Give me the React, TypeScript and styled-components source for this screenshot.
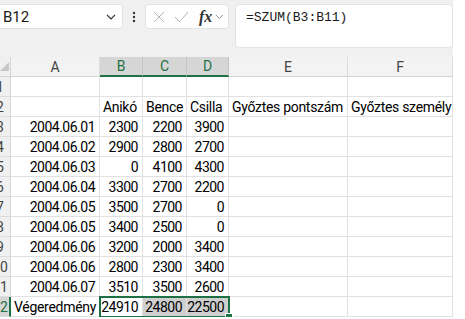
import React from "react";
import styled, { createGlobalStyle } from "styled-components";

const GlobalStyle = createGlobalStyle`
    body {
        margin: 0;
        background: #ffffff;
        font-family: Roboto, "Liberation Sans", sans-serif;
        overflow: hidden;
    }
`;

const Page = styled.div`
    width: 453px;
    overflow: hidden;
`;

const Toolbar = styled.div`
    display: flex;
    align-items: flex-start;
    height: 57px;
    padding-top: 4px;
    box-sizing: border-box;
    background: #f0f0f0;
`;

const NameBox = styled.div`
    display: flex;
    align-items: center;
    justify-content: space-between;
    width: 129px;
    height: 25px;
    margin-left: -6px;
    padding: 0 6px 0 8px;
    box-sizing: border-box;
    background: #ffffff;
    border: 1px solid #e2e2e2;
    border-radius: 4px;
    font-size: 15px;
    color: #1a1a1a;
`;

const Dots = styled.div`
    display: flex;
    align-items: center;
    justify-content: center;
    width: 22px;
    height: 25px;
`;

const FxBox = styled.div`
    display: flex;
    align-items: center;
    width: 84px;
    height: 25px;
    padding: 0 4px 0 7px;
    box-sizing: border-box;
    background: #ffffff;
    border: 1px solid #e2e2e2;
    border-radius: 4px;
`;

const FxIcon = styled.span<{ $gap: number }>`
    display: flex;
    align-items: center;
    margin-right: ${(p) => p.$gap}px;
`;

const Fx = styled.span`
    font-family: "Liberation Serif", serif;
    font-style: italic;
    font-weight: bold;
    font-size: 16px;
    color: #333333;
    margin-right: 3px;
`;

const FormulaBox = styled.div`
    width: 218px;
    height: 44px;
    margin-left: 6px;
    padding: 4px 10px;
    box-sizing: border-box;
    background: #ffffff;
    border: 1px solid #e2e2e2;
    border-radius: 4px;
    font-family: "Liberation Mono", monospace;
    font-size: 13px;
    line-height: 18px;
    color: #1a1a1a;
`;

const Sheet = styled.div`
    position: relative;
    display: grid;
    grid-template-columns: 11px 89px 43px 44px 42px 119px 105px;
    grid-auto-rows: 20px;
`;

const Corner = styled.div`
    background: #f0f0f0;
    border-right: 1px solid #d4d4d4;
    border-bottom: 1px solid #d4d4d4;
    box-sizing: border-box;
    display: flex;
    align-items: flex-end;
    padding: 0 0 5px 0;
`;

const ColHeader = styled.div<{ $active?: boolean }>`
    display: flex;
    align-items: center;
    justify-content: center;
    box-sizing: border-box;
    background: ${(p) => (p.$active ? "#d6d6d6" : "#f3f3f3")};
    border-right: 1px solid ${(p) => (p.$active ? "#c4c4c4" : "#dcdcdc")};
    border-bottom: ${(p) => (p.$active ? "2px solid #1e7145" : "1px solid #d4d4d4")};
    color: ${(p) => (p.$active ? "#1e7145" : "#444444")};
    font-size: 14px;
`;

const RowHeader = styled.div<{ $active?: boolean }>`
    display: flex;
    align-items: center;
    overflow: hidden;
    box-sizing: border-box;
    background: ${(p) => (p.$active ? "#d6d6d6" : "#f0f0f0")};
    border-right: ${(p) => (p.$active ? "2px solid #1e7145" : "1px solid #d4d4d4")};
    border-bottom: 1px solid #dcdcdc;
    color: ${(p) => (p.$active ? "#1e7145" : "#444444")};
    font-size: 14px;
`;

const RowNumber = styled.span`
    flex: none;
    width: 22px;
    margin-left: -11px;
    text-align: center;
`;

const Cell = styled.div<{ $num?: boolean; $shade?: boolean }>`
    display: flex;
    align-items: center;
    justify-content: ${(p) => (p.$num ? "flex-end" : "flex-start")};
    padding: 0 4px 0 3px;
    box-sizing: border-box;
    white-space: nowrap;
    background: ${(p) => (p.$shade ? "#cfcfcf" : "#ffffff")};
    border-right: 1px solid #e1e1e1;
    border-bottom: 1px solid #e1e1e1;
    font-size: 14px;
    letter-spacing: ${(p) => (p.$num ? "-0.5px" : "-0.3px")};
    color: #000000;
`;

const Selection = styled.div`
    position: absolute;
    left: 99px;
    top: 239px;
    width: 131px;
    height: 22px;
    box-sizing: border-box;
    border: 2px solid #1e7145;
    pointer-events: none;
`;

const FillHandle = styled.div`
    position: absolute;
    right: -5px;
    bottom: -5px;
    width: 6px;
    height: 6px;
    background: #1e7145;
    border: 1px solid #ffffff;
`;

const Chevron = ({ color, size }: { color: string; size: number }) => (
    <svg width={size} height={size * 0.6} viewBox="0 0 10 6">
        <path d="M1 1 L5 5 L9 1" fill="none" stroke={color} strokeWidth="1.1" />
    </svg>
);

type Row = (string | number | null)[];

const rows: Row[] = [
    [null, null, null, null, null, null],
    [null, "Anikó", "Bence", "Csilla", "Győztes pontszám", "Győztes személy"],
    ["2004.06.01", 2300, 2200, 3900, null, null],
    ["2004.06.02", 2900, 2800, 2700, null, null],
    ["2004.06.03", 0, 4100, 4300, null, null],
    ["2004.06.04", 3300, 2700, 2200, null, null],
    ["2004.06.05", 3500, 2700, 0, null, null],
    ["2004.06.05", 3400, 2500, 0, null, null],
    ["2004.06.06", 3200, 2000, 3400, null, null],
    ["2004.06.06", 2800, 2300, 3400, null, null],
    ["2004.06.07", 3510, 3500, 2600, null, null],
    ["Végeredmény", 24910, 24800, 22500, null, null],
];

const columns = ["A", "B", "C", "D", "E", "F"];
const activeCols = ["B", "C", "D"];

const isDate = (v: string | number | null) =>
    typeof v === "string" && /^\d{4}\.\d{2}\.\d{2}$/.test(v);

export default function App() {
    return (
        <Page>
            <GlobalStyle />
            <Toolbar>
                <NameBox>
                    <span>B12</span>
                    <Chevron color="#333333" size={10} />
                </NameBox>
                <Dots>
                    <svg width="4" height="12" viewBox="0 0 4 12">
                        <circle cx="2" cy="2" r="1.2" fill="#333" />
                        <circle cx="2" cy="6" r="1.2" fill="#333" />
                        <circle cx="2" cy="10" r="1.2" fill="#333" />
                    </svg>
                </Dots>
                <FxBox>
                    <FxIcon $gap={9}>
                        <svg width="12" height="12" viewBox="0 0 12 12">
                            <path d="M1 1 L11 11 M11 1 L1 11" stroke="#b4b4b4" strokeWidth="1" />
                        </svg>
                    </FxIcon>
                    <FxIcon $gap={10}>
                        <svg width="15" height="12" viewBox="0 0 15 12">
                            <path d="M1 6 L5.5 11 L14 1" fill="none" stroke="#b4b4b4" strokeWidth="1" />
                        </svg>
                    </FxIcon>
                    <Fx>fx</Fx>
                    <Chevron color="#8a8a8a" size={9} />
                </FxBox>
                <FormulaBox>=SZUM(B3:B11)</FormulaBox>
            </Toolbar>
            <Sheet>
                <Corner>
                    <svg width="9" height="9" viewBox="0 0 9 9">
                        <path d="M9 0 L9 9 L0 9 Z" fill="#c8c8c8" />
                    </svg>
                </Corner>
                {columns.map((c) => (
                    <ColHeader key={c} $active={activeCols.includes(c)}>
                        {c}
                    </ColHeader>
                ))}
                {rows.map((row, r) => (
                    <React.Fragment key={r}>
                        <RowHeader $active={r === 11}>
                            <RowNumber>{r + 1}</RowNumber>
                        </RowHeader>
                        {row.map((v, c) => (
                            <Cell
                                key={c}
                                $num={typeof v === "number" || isDate(v)}
                                $shade={r === 11 && (c === 2 || c === 3)}
                            >
                                {v}
                            </Cell>
                        ))}
                    </React.Fragment>
                ))}
                <Selection>
                    <FillHandle />
                </Selection>
            </Sheet>
        </Page>
    );
}
